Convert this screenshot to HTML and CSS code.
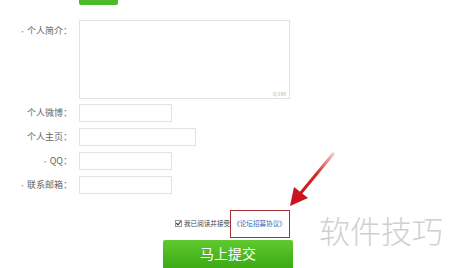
FILE: index.html
```html
<!DOCTYPE html>
<html>
<head>
	<meta charset="utf-8">
	<title>个人资料</title>
	<link rel="stylesheet" href="styles.css">
</head>
<body>
	<div class="page">
		<div class="top-btn"></div>
		<div class="form">
			<div class="row row-intro">
				<label class="lbl"><i>•</i>个人简介：</label>
				<div class="area">
					<span class="count">0/100</span>
				</div>
			</div>
			<div class="row">
				<label class="lbl">个人微博：</label>
				<div class="ipt"></div>
			</div>
			<div class="row">
				<label class="lbl">个人主页：</label>
				<div class="ipt ipt-wide"></div>
			</div>
			<div class="row">
				<label class="lbl"><i>•</i>QQ：</label>
				<div class="ipt"></div>
			</div>
			<div class="row">
				<label class="lbl"><i>•</i>联系邮箱：</label>
				<div class="ipt"></div>
			</div>
		</div>
		<div class="agree">
			<span class="check"></span>
			<span class="agree-txt">我已阅读并接受</span>
			<span class="mark"><a href="javascript:;">《论坛招募协议》</a></span>
		</div>
		<a class="submit" href="javascript:;">马上提交</a>

		<!-- 标注：箭头和水印 -->
		<svg class="arrow" width="50" height="56" viewBox="0 0 50 56">
			<defs>
				<linearGradient id="ag" x1="1" y1="0" x2="0" y2="1">
					<stop offset="0" stop-color="#f2c5c5"/>
					<stop offset="0.5" stop-color="#d42a2a"/>
					<stop offset="1" stop-color="#c8141c"/>
				</linearGradient>
			</defs>
			<path d="M44 2 L11 42" stroke="url(#ag)" stroke-width="3" stroke-linecap="round"/>
			<path d="M1 54 L5 35 L19 46 Z" fill="#c8141c"/>
		</svg>
		<div class="watermark">软件技巧</div>
	</div>
</body>
</html>
```

FILE: styles.css
```css
* {
	margin: 0;
	padding: 0;
}
body {
	font: 9px/1.5 "Noto Sans CJK SC", "Liberation Sans", sans-serif;
	color: #666;
	background: #fff;
}
.page {
	width: 450px;
	height: 268px;
	position: relative;
	overflow: hidden;
}
a {
	text-decoration: none;
}
.top-btn {
	width: 39px;
	height: 5px;
	margin-left: 79px;
	background: #4cb82a;
	border-radius: 0 0 2px 2px;
}
.form {
	margin-top: 15px;
}
.row {
	display: flex;
	align-items: center;
	margin-bottom: 6px;
}
.row-intro {
	align-items: flex-start;
	margin-bottom: 5px;
}
.lbl {
	width: 72px;
	text-align: right;
	margin-right: 7px;
	color: #666;
}
.row-intro .lbl {
	padding-top: 4px;
}
.lbl i {
	font-style: normal;
	color: #d77;
	font-size: 7px;
	margin-right: 1px;
}
.area {
	width: 209px;
	height: 77px;
	border: 1px solid #e2e2e2;
	position: relative;
}
.count {
	position: absolute;
	right: 3px;
	bottom: 1px;
	font-size: 5px;
	color: #aaa;
}
.ipt {
	width: 91px;
	height: 16px;
	border: 1px solid #e2e2e2;
}
.ipt-wide {
	width: 115px;
}
.agree {
	display: flex;
	align-items: center;
	margin: 16px 0 0 175px;
	font-size: 6.6px;
	color: #444;
}
.check {
	width: 5px;
	height: 5px;
	border: 1px solid #999;
	margin-right: 2px;
	position: relative;
}
.check:after {
	content: "";
	position: absolute;
	left: 1px;
	top: -1px;
	width: 2px;
	height: 4px;
	border: solid #333;
	border-width: 0 1px 1px 0;
	transform: rotate(40deg);
}
.mark {
	display: inline-block;
	border: 1.5px solid #9e3036;
	padding: 8px 3px 8px 2px;
}
.mark a {
	color: #3a67b0;
}
.submit {
	display: block;
	width: 130px;
	height: 30px;
	margin: 2px 0 0 163px;
	background: linear-gradient(#5fc92e, #3aa814);
	border-radius: 2px;
	color: #fff;
	font-size: 14px;
	line-height: 27px;
	text-align: center;
}
.arrow {
	position: absolute;
	left: 289px;
	top: 152px;
}
.watermark {
	position: absolute;
	left: 319px;
	top: 211px;
	font-size: 31px;
	font-weight: 300;
	line-height: 1.2;
	color: #d0d0d0;
}
```
